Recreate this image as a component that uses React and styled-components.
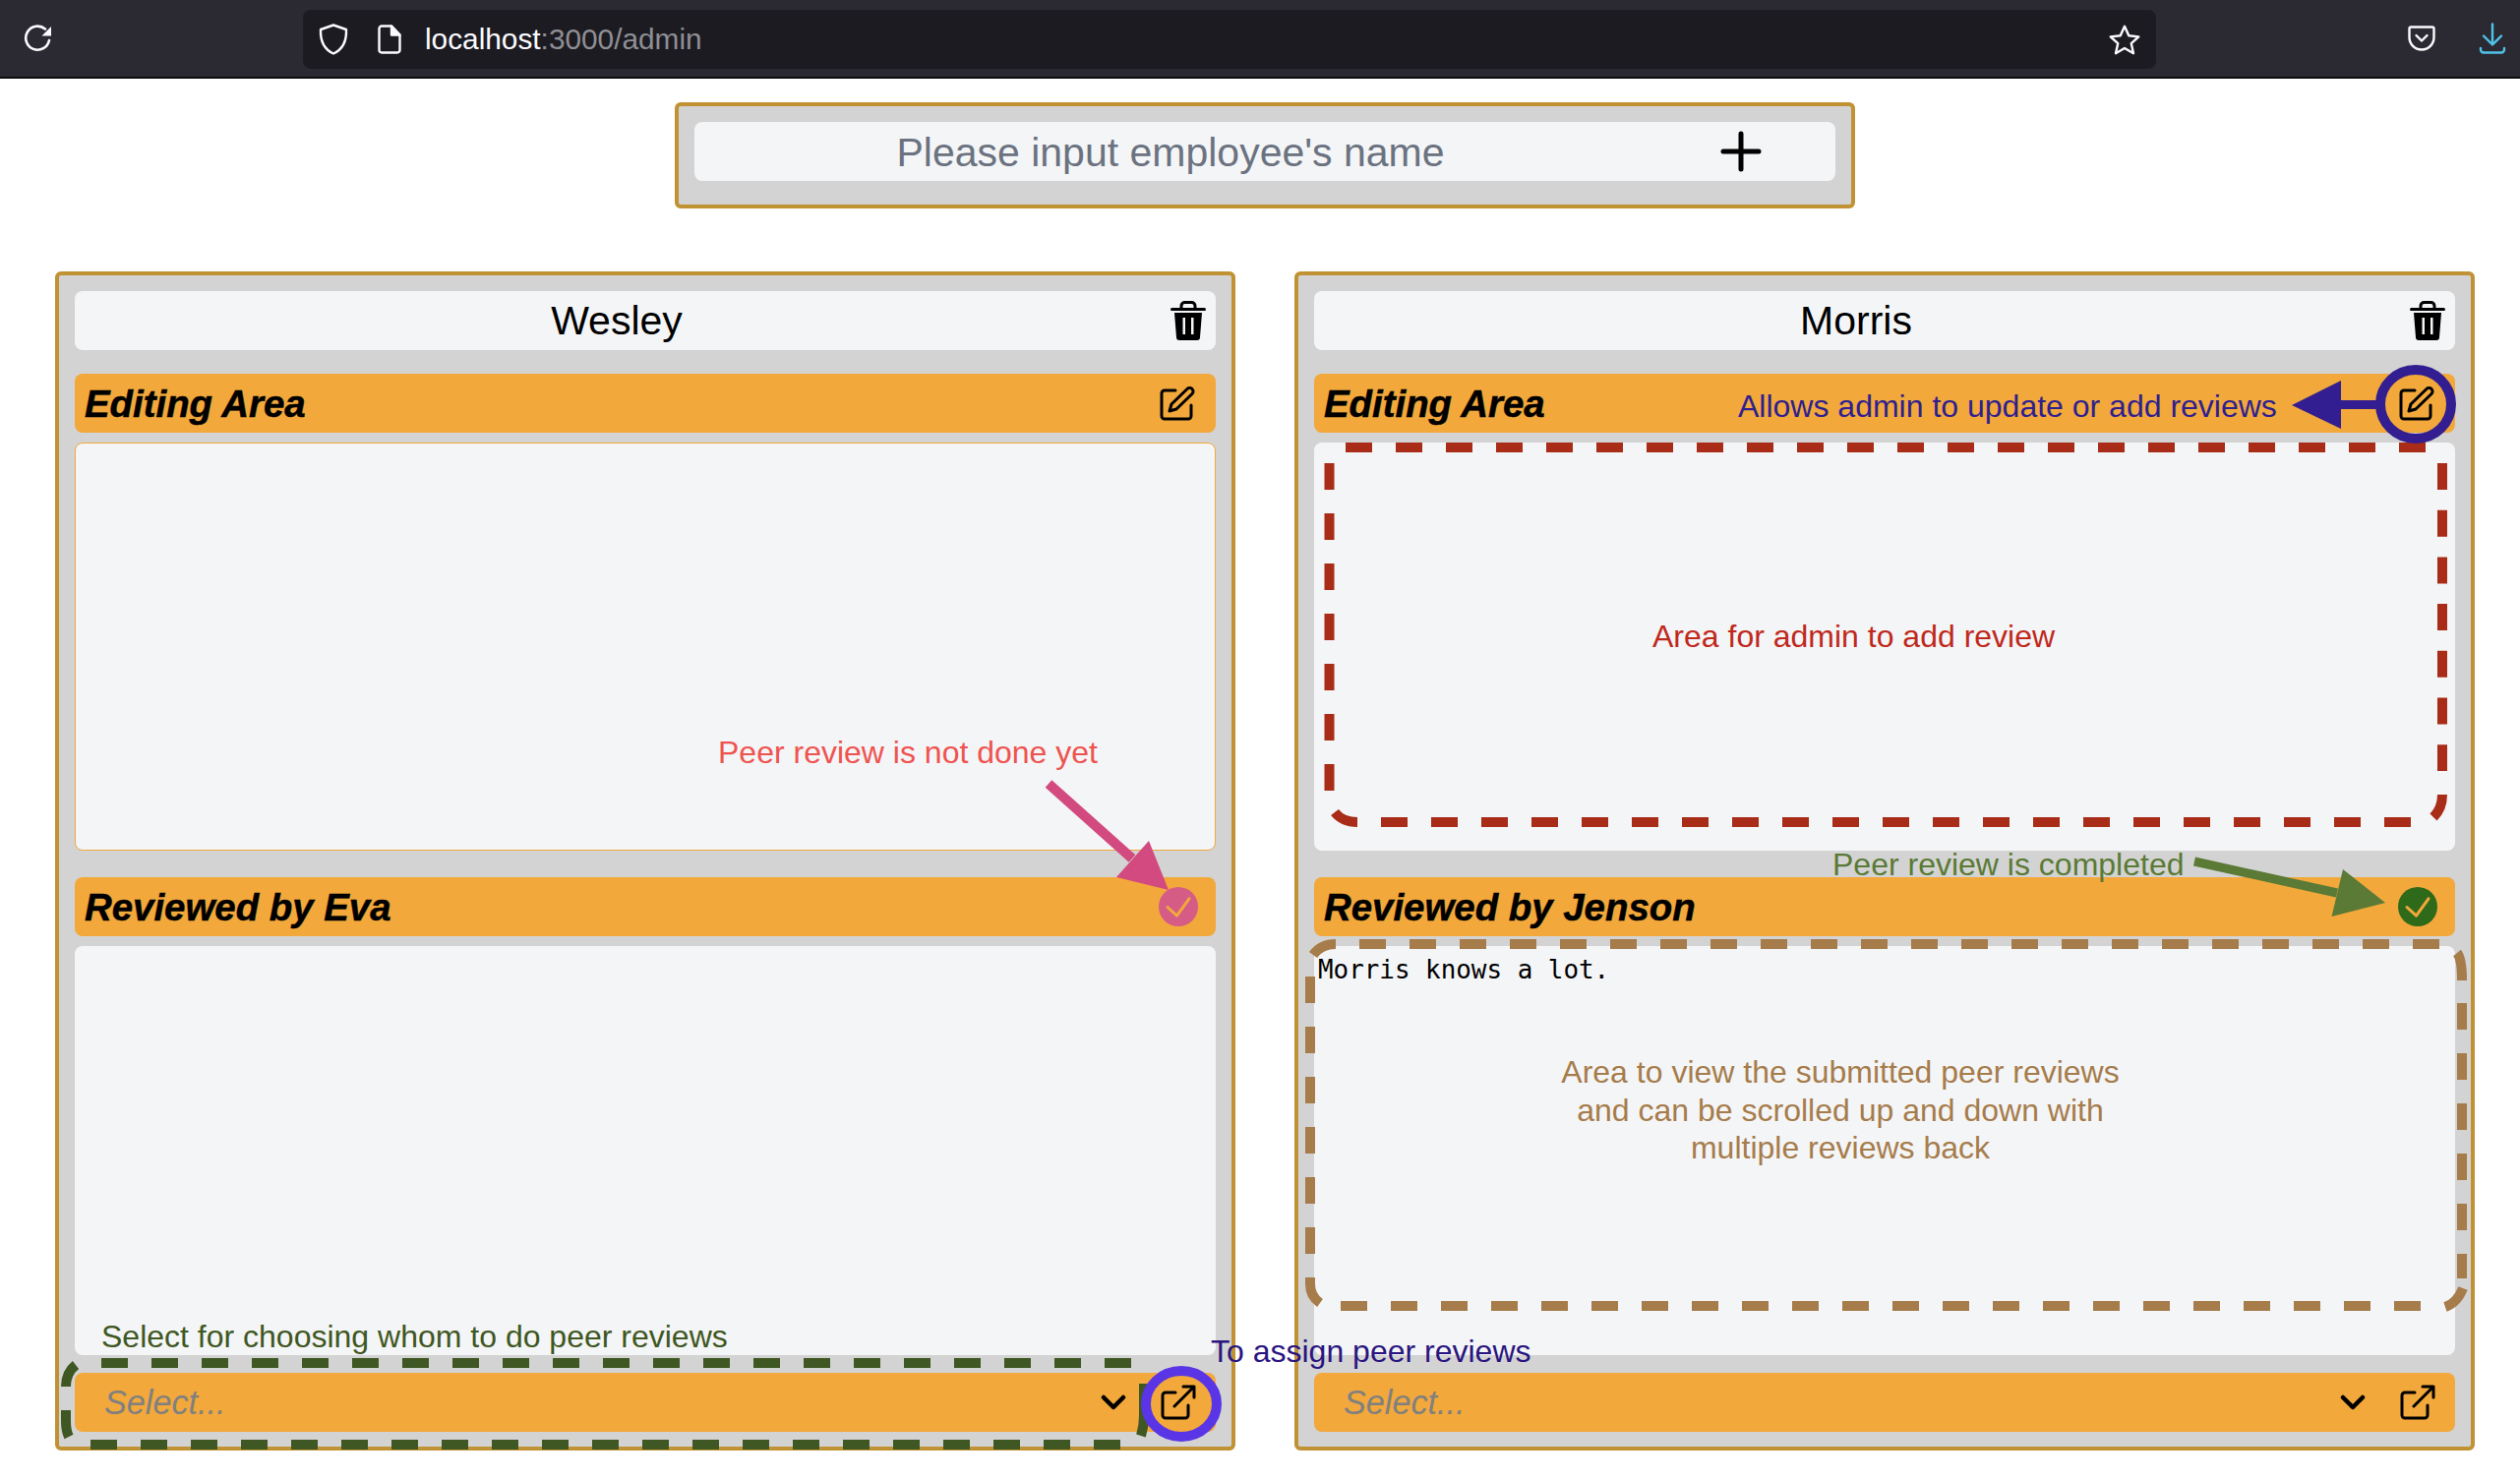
import React from 'react';
import styled, { createGlobalStyle } from 'styled-components';

const GlobalStyle = createGlobalStyle`
  html, body {
    margin: 0;
    background: #fff;
    font-family: "Liberation Sans", Arial, sans-serif;
  }
  * { box-sizing: border-box; }
`;

const Page = styled.div`
  position: relative;
  width: 2562px;
  height: 1506px;
  overflow: hidden;
`;

const Toolbar = styled.div`
  display: flex;
  align-items: center;
  height: 80px;
  background: #2b2a33;
  border-bottom: 2px solid #0c0c0d;
  padding: 0 0 0 24px;
`;

const ReloadSlot = styled.div`
  display: flex;
  flex: none;
  width: 284px;
`;

const UrlBar = styled.div`
  display: flex;
  align-items: center;
  flex: none;
  width: 1884px;
  height: 60px;
  margin-top: 2px;
  padding: 0 16px;
  background: #1c1b22;
  border-radius: 8px;
  color: #fbfbfe;
`;

const UrlIcons = styled.div`
  display: flex;
  align-items: center;
  gap: 30px;
  margin-right: 24px;
`;

const UrlText = styled.div`
  flex: 1;
  font-size: 29.8px;
  color: #fbfbfe;
`;

const UrlMuted = styled.span`
  color: #8f8f94;
`;

const RightIcons = styled.div`
  display: flex;
  align-items: center;
  flex: none;
  gap: 44px;
  margin-left: 256px;
`;

const Content = styled.div`
  display: flex;
  flex-direction: column;
  align-items: center;
  padding: 24px 46px 0 56px;
`;

const AddBox = styled.div`
  display: flex;
  width: 1200px;
  padding: 16px 16px 24px;
  background: #d3d3d3;
  border: 4px solid #c09234;
  border-radius: 6px;
`;

const AddField = styled.div`
  display: flex;
  flex: 1;
  height: 60px;
  background: #f4f5f7;
  border-radius: 8px;
`;

const NameInput = styled.input`
  flex: 1;
  min-width: 0;
  border: 0;
  outline: 0;
  padding: 2px 0 0;
  background: transparent;
  text-align: center;
  font-family: inherit;
  font-size: 41px;
  color: #111;

  &::placeholder {
    color: #6b7280;
    opacity: 1;
  }
`;

const AddButton = styled.div`
  display: flex;
  align-items: center;
  justify-content: center;
  width: 192px;
`;

const Cards = styled.div`
  display: grid;
  grid-template-columns: 1200px 1200px;
  gap: 60px;
  margin-top: 64px;
`;

const Card = styled.section`
  display: flex;
  flex-direction: column;
  height: 1199px;
  padding: 16px;
  background: #d3d3d3;
  border: 4px solid #c09234;
  border-radius: 6px;
`;

const TitleRow = styled.div`
  display: flex;
  align-items: center;
  height: 60px;
  flex: none;
  background: #f4f5f7;
  border-radius: 8px;
`;

const Name = styled.div`
  flex: 1;
  padding-top: 1px;
  text-align: center;
  font-size: 41px;
  color: #000;
`;

const TrashButton = styled.div`
  display: flex;
  justify-content: center;
  width: 58px;
  padding-left: 2px;
`;

const SectionBar = styled.div`
  display: flex;
  align-items: center;
  justify-content: space-between;
  flex: none;
  height: 60px;
  margin-top: ${props => props.$top}px;
  padding: 0 18px 0 10px;
  background: #f2a83b;
  border-radius: 8px;
`;

const SectionTitle = styled.div`
  padding-top: 2px;
  font-size: 38.4px;
  font-weight: 700;
  font-style: italic;
  color: #000;
  -webkit-text-stroke: 0.5px #000;
`;

const EditSlot = styled.div`
  display: flex;
  margin-right: 3px;
`;

const ReviewArea = styled.div`
  flex: none;
  height: ${props => props.$height}px;
  margin-top: 10px;
  padding: 8px 3px;
  background: #f4f5f7;
  border: 1px solid ${props => (props.$focused ? '#f2a83b' : 'transparent')};
  border-radius: 8px;
  font-family: "DejaVu Sans Mono", monospace;
  font-size: 25.9px;
  line-height: 30px;
  color: #000;
`;

const SelectBar = styled.div`
  display: flex;
  align-items: center;
  flex: none;
  height: 60px;
  margin-top: 18px;
  padding: 0 20px 0 30px;
  background: #f2a83b;
  border-radius: 8px;
`;

const Placeholder = styled.div`
  flex: 1;
  font-size: 34.2px;
  font-style: italic;
  color: #808080;
`;

const Chevron = styled.svg`
  margin-right: 35px;
`;

const StatusDot = styled.div`
  display: flex;
  align-items: center;
  justify-content: center;
  width: 40px;
  height: 40px;
  border-radius: 50%;
  background: ${props => props.$color};
`;

const Overlay = styled.svg`
  position: absolute;
  left: 0;
  top: 0;
  pointer-events: none;
`;

const Note = styled.div`
  position: absolute;
  left: ${props => props.$x}px;
  top: ${props => props.$y}px;
  width: ${props => (props.$width ? `${props.$width}px` : 'auto')};
  font-size: 32px;
  line-height: 38.5px;
  white-space: pre-line;
  text-align: ${props => (props.$width ? 'center' : 'left')};
  color: ${props => props.$color};
`;

const TrashIcon = () => (
  <svg width="36" height="42" viewBox="0 0 36 42">
    <path d="M11 8V6a3.5 3.5 0 0 1 3.5-3.5h7A3.5 3.5 0 0 1 25 6v2" fill="none" stroke="#000" strokeWidth="3" />
    <path d="M1.5 9.5h33" stroke="#000" strokeWidth="3" strokeLinecap="round" />
    <path
      d="M4 13h28l-2 25a3 3 0 0 1-3 3H9a3 3 0 0 1-3-3Z M12.5 18v17h2.5V18Z M21 18v17h2.5V18Z"
      fill="#000"
      fillRule="evenodd"
    />
  </svg>
);

const EditIcon = () => (
  <svg width="36" height="37" viewBox="0 0 36 37" fill="none" stroke="#000" strokeWidth="3" strokeLinecap="round" strokeLinejoin="round">
    <path d="M16 5H5a3 3 0 0 0-3 3v23a3 3 0 0 0 3 3h24a3 3 0 0 0 3-3V20" />
    <path d="M10 26l2-7L28 3.5a3.5 3.5 0 0 1 5 5L17 24Z" />
  </svg>
);

const ExternalIcon = () => (
  <svg width="36" height="36" viewBox="0 0 36 36" fill="none" stroke="#000" strokeWidth="3" strokeLinecap="round" strokeLinejoin="round">
    <path d="M15 8H5a3 3 0 0 0-3 3v20a3 3 0 0 0 3 3h20a3 3 0 0 0 3-3V21" />
    <path d="M14 22L34 2M23 2h11v11" />
  </svg>
);

const CheckMark = () => (
  <svg width="30" height="24" viewBox="0 0 30 24" fill="none" stroke="#f2a83b" strokeWidth="3" strokeLinecap="round" strokeLinejoin="round">
    <path d="M4 12.5l9.5 8.7L26 3.8" />
  </svg>
);

const ReloadIcon = () => (
  <svg width="30" height="30" viewBox="0 0 30 30" fill="none">
    <path d="M26 17a12 12 0 1 1-4-11.5" stroke="#fbfbfe" strokeWidth="2.6" strokeLinecap="round" />
    <path d="M28 3v9.5h-9.5Z" fill="#fbfbfe" />
  </svg>
);

const ShieldIcon = () => (
  <svg width="30" height="32" viewBox="0 0 30 32" fill="none" stroke="#fbfbfe" strokeWidth="2.4" strokeLinejoin="round">
    <path d="M15 1.5L28 6c.5 12-3 20-13 24.5C5 26 1.5 18 2 6Z" />
  </svg>
);

const PageIcon = () => (
  <svg width="24" height="30" viewBox="0 0 24 30" fill="none" stroke="#fbfbfe" strokeWidth="2.4" strokeLinejoin="round">
    <path d="M4 1.5h10l8.5 9V26a2.5 2.5 0 0 1-2.5 2.5H4A2.5 2.5 0 0 1 1.5 26V4A2.5 2.5 0 0 1 4 1.5Z" />
    <path d="M14 1.5v9h8.5Z" fill="#fbfbfe" />
  </svg>
);

const StarIcon = () => (
  <svg width="32" height="31" viewBox="0 0 32 31" fill="none" stroke="#fbfbfe" strokeWidth="2.4" strokeLinejoin="round">
    <path d="M16 1.8l4.3 9.5 10 1.1-7.5 6.8 2.2 10-9-5.2-9 5.2 2.2-10-7.5-6.8 10-1.1Z" />
  </svg>
);

const PocketIcon = () => (
  <svg width="28" height="26" viewBox="0 0 28 26" fill="none" stroke="#fbfbfe" strokeWidth="2.4" strokeLinecap="round" strokeLinejoin="round">
    <path d="M3 1.5h22A1.5 1.5 0 0 1 26.5 3v9a12.5 12.5 0 0 1-25 0V3A1.5 1.5 0 0 1 3 1.5Z" />
    <path d="M8.5 10l5.5 5.5L19.5 10" />
  </svg>
);

const DownloadIcon = () => (
  <svg width="28" height="32" viewBox="0 0 28 32" fill="none" stroke="#4fc3e8" strokeWidth="2.4" strokeLinecap="round" strokeLinejoin="round">
    <path d="M14 1.5V22M5 13.5l9 9 9-9" />
    <path d="M2 26v1.5a3 3 0 0 0 3 3h18a3 3 0 0 0 3-3V26" />
  </svg>
);

const frames = [
  {
    color: '#a82c18',
    dash: '27 24',
    lines: [
      [1368, 455, 2466, 455],
      [1351.5, 471, 1351.5, 804],
      [1404, 836, 2451, 836],
    ],
    arcs: ['M1357 826Q1365 836 1380 836', 'M2483 808Q2483 822 2474 831'],
  },
  {
    color: '#a82c18',
    dash: '27 20.7',
    lines: [[2483, 471, 2483, 784]],
    arcs: [],
  },
  {
    color: '#a67c4b',
    dash: '27 24',
    lines: [
      [1382, 960, 2480, 960],
      [1332, 993, 1332, 1275],
      [2503, 1020, 2503, 1300],
      [1363, 1328, 2461, 1328],
    ],
    arcs: [
      'M1335 971Q1343 960 1358 960',
      'M1332 1299V1306Q1332 1318 1342 1325',
      'M2498 969Q2503 975 2503 997',
      'M2504 1310Q2498 1325 2486 1329',
    ],
  },
  {
    color: '#3f5722',
    dash: '27 24',
    lines: [
      [103, 1386, 1150, 1386],
      [92, 1469, 1139, 1469],
    ],
    arcs: [
      'M77 1388Q67 1396 67 1410',
      'M67 1434V1445Q67 1455 70 1461',
      'M1163 1407V1440Q1163 1450 1160 1460',
    ],
  },
];

const Annotations = () => (
  <Overlay width="2562" height="1506" viewBox="0 0 2562 1506" fill="none">
    {frames.map(frame => (
      <g key={frame.dash + frame.color} stroke={frame.color} strokeWidth="10">
        {frame.lines.map(([x1, y1, x2, y2]) => (
          <line key={`${x1}-${y1}`} x1={x1} y1={y1} x2={x2} y2={y2} strokeDasharray={frame.dash} />
        ))}
        {frame.arcs.map(d => (
          <path key={d} d={d} />
        ))}
      </g>
    ))}

    <ellipse cx="2456" cy="411" rx="36" ry="35" stroke="#321e90" strokeWidth="10" />
    <path d="M2418 411.5H2378" stroke="#321e90" strokeWidth="9" />
    <path d="M2330 412L2380 387V436Z" fill="#321e90" />

    <ellipse cx="1201" cy="1427.5" rx="36" ry="33.5" stroke="#5a35e6" strokeWidth="10" />

    <path d="M1066 797L1151 873" stroke="#d24a7f" strokeWidth="10" />
    <path d="M1188 905L1168 855L1135 892Z" fill="#d24a7f" />

    <path d="M2231 876L2376 908" stroke="#5a7a35" strokeWidth="9" />
    <path d="M2425 918L2382 884L2370.5 932Z" fill="#5a7a35" />
  </Overlay>
);

const MemberCard = ({ name, reviewer, doneColor, focused, review }) => (
  <Card>
    <TitleRow>
      <Name>{name}</Name>
      <TrashButton>
        <TrashIcon />
      </TrashButton>
    </TitleRow>
    <SectionBar $top={24}>
      <SectionTitle>Editing Area</SectionTitle>
      <EditSlot>
        <EditIcon />
      </EditSlot>
    </SectionBar>
    <ReviewArea $height={415} $focused={focused} />
    <SectionBar $top={27}>
      <SectionTitle>Reviewed by {reviewer}</SectionTitle>
      <StatusDot $color={doneColor}>
        <CheckMark />
      </StatusDot>
    </SectionBar>
    <ReviewArea $height={416}>{review}</ReviewArea>
    <SelectBar>
      <Placeholder>Select...</Placeholder>
      <Chevron width="26" height="16" viewBox="0 0 26 16" fill="none" stroke="#000" strokeWidth="4.5" strokeLinecap="round" strokeLinejoin="round">
        <path d="M3 3l10 10L23 3" />
      </Chevron>
      <ExternalIcon />
    </SelectBar>
  </Card>
);

const App = () => (
  <Page>
    <GlobalStyle />
    <Toolbar>
      <ReloadSlot>
        <ReloadIcon />
      </ReloadSlot>
      <UrlBar>
        <UrlIcons>
          <ShieldIcon />
          <PageIcon />
        </UrlIcons>
        <UrlText>
          localhost<UrlMuted>:3000/admin</UrlMuted>
        </UrlText>
        <StarIcon />
      </UrlBar>
      <RightIcons>
        <PocketIcon />
        <DownloadIcon />
      </RightIcons>
    </Toolbar>

    <Content>
      <AddBox>
        <AddField>
          <NameInput placeholder="Please input employee's name" readOnly />
          <AddButton>
            <svg width="44" height="44" viewBox="0 0 44 44" stroke="#000" strokeWidth="5" strokeLinecap="round">
              <path d="M22 4V40M4 22H40" />
            </svg>
          </AddButton>
        </AddField>
      </AddBox>
      <Cards>
        <MemberCard name="Wesley" reviewer="Eva" doneColor="#d55c85" focused />
        <MemberCard name="Morris" reviewer="Jenson" doneColor="#2f6a1a" review="Morris knows a lot." />
      </Cards>
    </Content>

    <Annotations />

    <Note $x={1767} $y={394} $color="#2f1f8f">Allows admin to update or add reviews</Note>
    <Note $x={730} $y={746} $color="#ef5350">Peer review is not done yet</Note>
    <Note $x={1680} $y={628} $color="#c0281c">Area for admin to add review</Note>
    <Note $x={1863} $y={860} $color="#5a7a35">Peer review is completed</Note>
    <Note $x={1471} $y={1071} $width={800} $color="#a67c4b">
      {'Area to view the submitted peer reviews\nand can be scrolled up and down with\nmultiple reviews back'}
    </Note>
    <Note $x={103} $y={1340} $color="#3f5722">Select for choosing whom to do peer reviews</Note>
    <Note $x={1231} $y={1355} $color="#2a1580">To assign peer reviews</Note>
  </Page>
);

export default App;
